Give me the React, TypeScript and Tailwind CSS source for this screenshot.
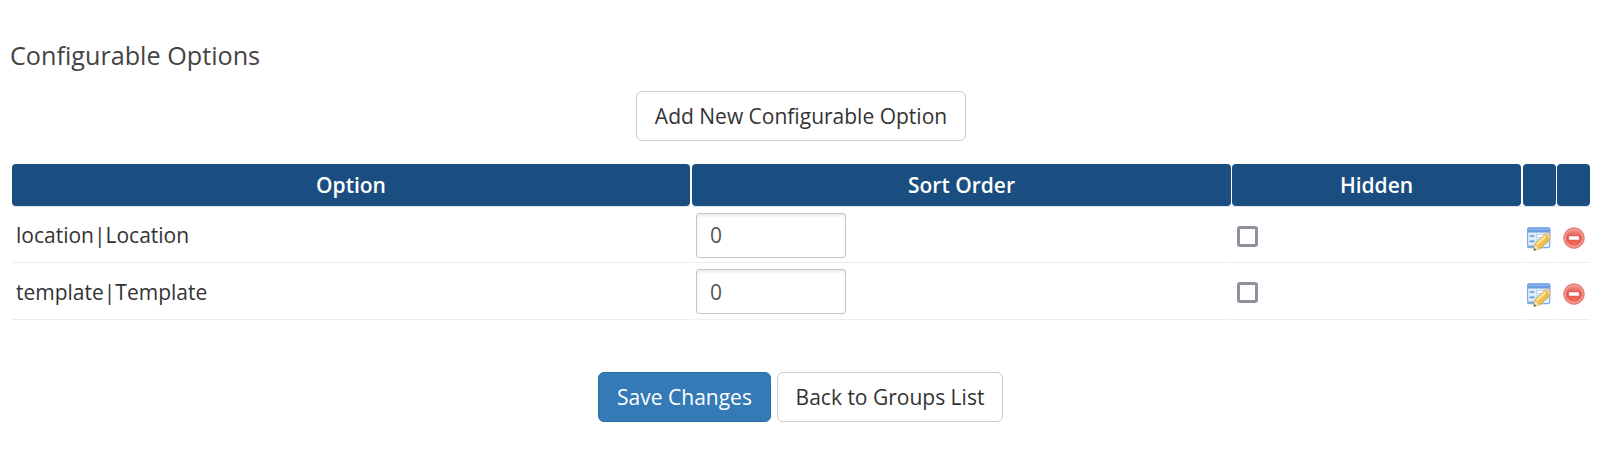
const options = [
  { id: 1, name: 'location|Location', height: 'h-[56px]', label: 'pt-[1px]', value: 'pb-[2px]' },
  { id: 2, name: 'template|Template', height: 'h-[57px]', label: 'pt-[2px]', value: '' },
];

const columns =
  'grid grid-cols-[679px_539px_290px_33px_33px] gap-x-px [&>*:nth-child(1)]:mr-px [&>*:nth-child(3)]:mr-px';

function EditIcon() {
  return (
    <svg width="24" height="24" viewBox="0 0 24 24" aria-label="Edit">
      <rect x="0.6" y="0.8" width="22.2" height="19.8" rx="1.4" fill="#e4eefb" stroke="#86a9dc" strokeWidth="1.2" />
      <path d="M0.4 2.2Q0.4 0.6 2 0.6H21.6Q23.2 0.6 23.2 2.2V5.4H0.4Z" fill="#6c9be0" />
      <rect x="1.6" y="1.6" width="20.4" height="1.3" fill="#92b8ee" />
      <rect x="0.8" y="18.4" width="11" height="2.6" fill="#83abe2" />
      <path d="M2.8 9H7.4M2.8 14.4H7.4" stroke="#5f93dc" strokeWidth="1.7" />
      <rect x="9.4" y="7.4" width="11" height="3.2" fill="#fff" stroke="#b3c9e8" strokeWidth="0.8" />
      <rect x="9.4" y="12.8" width="11" height="3.2" fill="#fff" stroke="#b3c9e8" strokeWidth="0.8" />
      <path d="M8 16.8L17.6 7.6L22.8 12.4L13 21.8L6.8 23.4Z" fill="#f0be4a" stroke="#cf9f45" strokeWidth="0.9" />
      <path d="M9.6 17.6L18.4 9.2" stroke="#fbe693" strokeWidth="2.4" />
      <path d="M17.6 7.6L19.4 6.2Q20.4 5.6 21.4 6.4L23.4 8.4Q24 9.4 23.4 10.6L22.4 12.2Z" fill="#edcda0" stroke="#cda463" strokeWidth="0.7" />
      <path d="M7.8 17.6L12.6 22L6.8 23.4Z" fill="#f3dfb4" />
      <path d="M7.2 21L9.4 22.8L6.6 23.6Z" fill="#655842" />
    </svg>
  );
}

function DeleteIcon() {
  return (
    <svg width="22" height="22" viewBox="0 0 22 22" aria-label="Delete">
      <defs>
        <linearGradient id="red" x1="0" y1="0" x2="0" y2="1">
          <stop offset="0" stopColor="#f08d84" />
          <stop offset="0.5" stopColor="#e2574d" />
          <stop offset="1" stopColor="#f2705f" />
        </linearGradient>
      </defs>
      <circle cx="11" cy="11" r="10.3" fill="#ec8a80" stroke="#dc7a72" strokeWidth="1" />
      <circle cx="11" cy="11" r="8.5" fill="url(#red)" stroke="#f3a79f" strokeWidth="0.9" />
      <rect x="5.8" y="9" width="10.4" height="4" rx="0.5" fill="#fff" stroke="#d95a50" strokeWidth="0.5" />
    </svg>
  );
}

function Header({ children }: { children?: string }) {
  return (
    <div className="h-[43px] border-b border-[#dde3ea]">
      <div className="flex h-[42px] items-center justify-center rounded-[4px] bg-[#1a4d80] font-semibold text-white">
        {children}
      </div>
    </div>
  );
}

const button = 'flex h-[50px] items-center justify-center rounded-[6px] border';

export default function App() {
  return (
    <main className="h-[457px] w-[1600px] overflow-hidden bg-white pt-[37px] font-['Open_Sans',sans-serif] text-[21px] leading-[30px] text-[#333]">
      <h1 className="h-[54px] pl-[10px] text-[25.2px] leading-[36px] text-[#444]">Configurable Options</h1>
      <div className="pl-[636px]">
        <button className={`${button} w-[330px] border-[#ccc] bg-white`}>Add New Configurable Option</button>
      </div>
      <section className="mt-[23px] pl-[12px]">
        <div className={columns}>
          <Header>Option</Header>
          <Header>Sort Order</Header>
          <Header>Hidden</Header>
          <Header />
          <Header />
        </div>
        {options.map((o) => (
          <div key={o.id} className={`${columns} ${o.height} *:border-b *:border-[#ebebeb]`}>
            <div className={`flex items-center pl-[4px] ${o.label}`}>{o.name}</div>
            <div className="pt-[6px] pl-[4px]">
              <input
                defaultValue="0"
                className={`block h-[45px] w-[150px] rounded-[3px] border border-[#c6c6c6] bg-white px-[13px] text-[#555] shadow-[inset_0_2px_3px_rgba(0,0,0,0.09)] outline-none ${o.value}`}
              />
            </div>
            <div className="pt-[19px] pl-[5px]">
              <input type="checkbox" className="block size-[21px] appearance-none rounded-[3px] border-3 border-[#8f8f9d] bg-white" />
            </div>
            <div className="pt-[20px] pl-[4px]"><EditIcon /></div>
            <div className="pt-[20px] pl-[6px]"><DeleteIcon /></div>
          </div>
        ))}
      </section>
      <div className="mt-[52px] flex gap-[6px] pl-[598px]">
        <button className={`${button} w-[173px] border-[#2e6da4] bg-[#337ab7] text-white`}>Save Changes</button>
        <button className={`${button} w-[226px] border-[#ccc] bg-white`}>Back to Groups List</button>
      </div>
    </main>
  );
}
